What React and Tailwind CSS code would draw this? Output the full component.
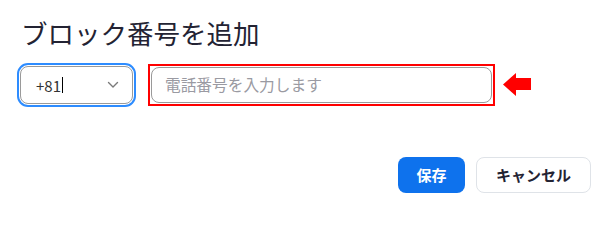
import React from "react";

export default function App() {
  return (
    <div className="w-[604px] h-[204px] bg-white overflow-hidden font-['Noto_Sans_CJK_JP','Noto_Sans',sans-serif]">
      <h1 className="pl-[21px] pt-[16px] text-[26.5px] leading-[34px] font-normal text-[#232333]">
        ブロック番号を追加
      </h1>
      <div className="flex items-center pl-[17px] mt-[13px]">
        <div className="rounded-[11px] border-2 border-[#2d8cff] p-px">
          <div className="w-[113px] h-[38px] rounded-[8px] border border-[#9a9a9a] flex items-center pl-[15px] pr-[13px]">
            <span className="text-[15px] text-[#333333] leading-none">+81</span>
            <span className="inline-block w-px h-[16px] bg-black ml-px" />
            <svg className="ml-auto" width="12" height="8" viewBox="0 0 12 8" fill="none">
              <polyline points="1.5,1.5 6,6 10.5,1.5" stroke="#7a7a7a" strokeWidth="1.4" strokeLinecap="round" strokeLinejoin="round" />
            </svg>
          </div>
        </div>
        <div className="ml-[12px] border-2 border-[#ff0000] p-px">
          <div className="w-[341px] h-[36px] rounded-[8px] border border-[#9a9a9a] flex items-center pl-[13px]">
            <span className="text-[15.7px] text-[#9a9aa2] leading-none">電話番号を入力します</span>
          </div>
        </div>
        <svg className="ml-[8px]" width="29" height="24" viewBox="0 0 29 24">
          <polygon points="0,11.5 13,0 13,5 28,5 28,17 13,17 13,23" fill="#ff0000" />
        </svg>
      </div>
      <div className="flex justify-end gap-[11px] pr-[13px] mt-[50px]">
        <button className="w-[67px] h-[36px] rounded-[8px] bg-[#0e72ed] text-white text-[15px] font-bold">
          保存
        </button>
        <button className="w-[115px] h-[36px] rounded-[8px] border border-[#dfe3e8] bg-white text-[#232333] text-[15px] font-bold">
          キャンセル
        </button>
      </div>
    </div>
  );
}
